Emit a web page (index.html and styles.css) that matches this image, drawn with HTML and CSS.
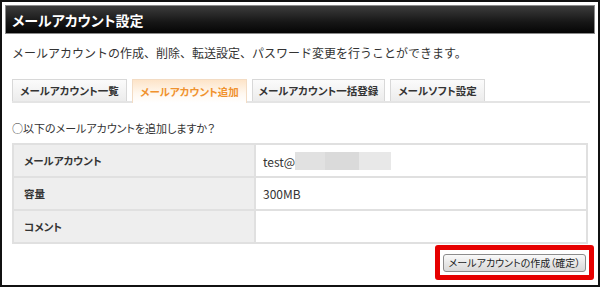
FILE: index.html
```html
<!DOCTYPE html>
<html lang="ja">
<head>
<meta charset="utf-8">
<link rel="stylesheet" href="styles.css">
</head>
<body>
<div class="frame">
  <div class="header"><h1 class="title">メールアカウント設定</h1></div>
  <p class="desc">メールアカウントの作成、削除、転送設定、パスワード変更を行うことができます。</p>
  <div class="tabs">
    <div class="tab t1">メールアカウント一覧</div>
    <div class="tab t2 active">メールアカウント追加</div>
    <div class="tab t3">メールアカウント一括登録</div>
    <div class="tab t4">メールソフト設定</div>
  </div>
  <p class="question">○以下のメールアカウントを追加しますか？</p>
  <table class="info">
    <tr><th>メールアカウント</th><td><span class="mail">test@</span><span class="blur b1"></span><span class="blur b2"></span><span class="blur b3"></span></td></tr>
    <tr><th>容量</th><td>300MB</td></tr>
    <tr><th>コメント</th><td></td></tr>
  </table>
  <div class="actions">
    <div class="highlight"><button class="submit" type="button">メールアカウントの作成（確定）</button></div>
  </div>
</div>
</body>
</html>
```

FILE: styles.css
```css
* { box-sizing: border-box; }
html, body { margin: 0; padding: 0; background: #fff; }
body {
  font-family: "Noto Sans CJK JP", "Noto Sans", sans-serif;
  color: #333;
  font-size: 12px;
}
.frame {
  width: 600px;
  height: 287px;
  border: 2px solid #111;
  padding: 3px;
  overflow: hidden;
}
.header {
  height: 29px;
  border: 1px solid #8a8a8a;
  background: linear-gradient(#3c3c3c, #161616 60%, #050505);
  display: flex;
  align-items: center;
  padding-left: 6px;
}
.title {
  margin: 0;
  color: #fff;
  font-size: 14px;
  font-weight: bold;
  line-height: 20px;
  font-feature-settings: "palt" 1;
}
.desc {
  margin: 10px 0 0 7px;
  line-height: 18px;
  font-size: 12px;
  color: #333;
}
.tabs {
  margin: 17px 5px 0 7px;
  display: flex;
  gap: 5px;
  border-bottom: 2px solid #e4e4e4;
  height: 24px;
}
.tab {
  height: 22px;
  border: 1px solid #d8d8d8;
  border-bottom: none;
  background: linear-gradient(#fbfbfb, #ececec);
  font-weight: bold;
  font-size: 10.5px;
  color: #333;
  display: flex;
  align-items: center;
  justify-content: center;
  white-space: nowrap;
  font-feature-settings: "palt" 1;
}
.t1 { width: 115px; }
.t2 { width: 115px; }
.t3 { width: 133px; }
.t4 { width: 95px; }
.tab.active {
  color: #f0922e;
  background: linear-gradient(#fde4c8, #fff8f0 60%, #fff);
  border-color: #f3dcc4;
  height: 24px;
}
.question {
  margin: 16px 0 0 7px;
  line-height: 18px;
  font-size: 11px;
  font-feature-settings: "palt" 1;
}
.info {
  margin: 6px 0 0 7px;
  width: 576px;
  border-collapse: collapse;
  font-size: 12px;
}
.info th, .info td {
  border: 2px solid #e0e0e0;
  height: 33px;
  padding: 0 0 0 7px;
  text-align: left;
  vertical-align: middle;
}
.info th {
  width: 242px;
  background: #eeeeee;
  font-weight: bold;
  font-size: 10.5px;
  padding-left: 10px;
  font-feature-settings: "palt" 1;
}
.info td { background: #fff; }
.mail { vertical-align: middle; }
.blur {
  display: inline-block;
  height: 18px;
  vertical-align: middle;
}
.b1 { width: 30px; background: #e1e1e1; }
.b2 { width: 34px; background: #dadada; }
.b3 { width: 32px; background: #e8e8e8; }
.actions {
  display: flex;
  justify-content: flex-end;
  margin-top: 1px;
  padding-right: 1px;
}
.highlight {
  border: 5px solid #e60000;
  border-radius: 3px;
  padding: 3px;
}
.submit {
  width: 143px;
  height: 18px;
  padding: 0;
  border: 1px solid #8c8c8c;
  border-radius: 3px;
  background: linear-gradient(#fafafa, #e6e6e6 55%, #d9d9d9);
  font-family: "Noto Sans CJK JP", "Noto Sans", sans-serif;
  font-size: 10px;
  color: #222;
  line-height: 16px;
  white-space: nowrap;
  font-feature-settings: "palt" 1;
}
```
